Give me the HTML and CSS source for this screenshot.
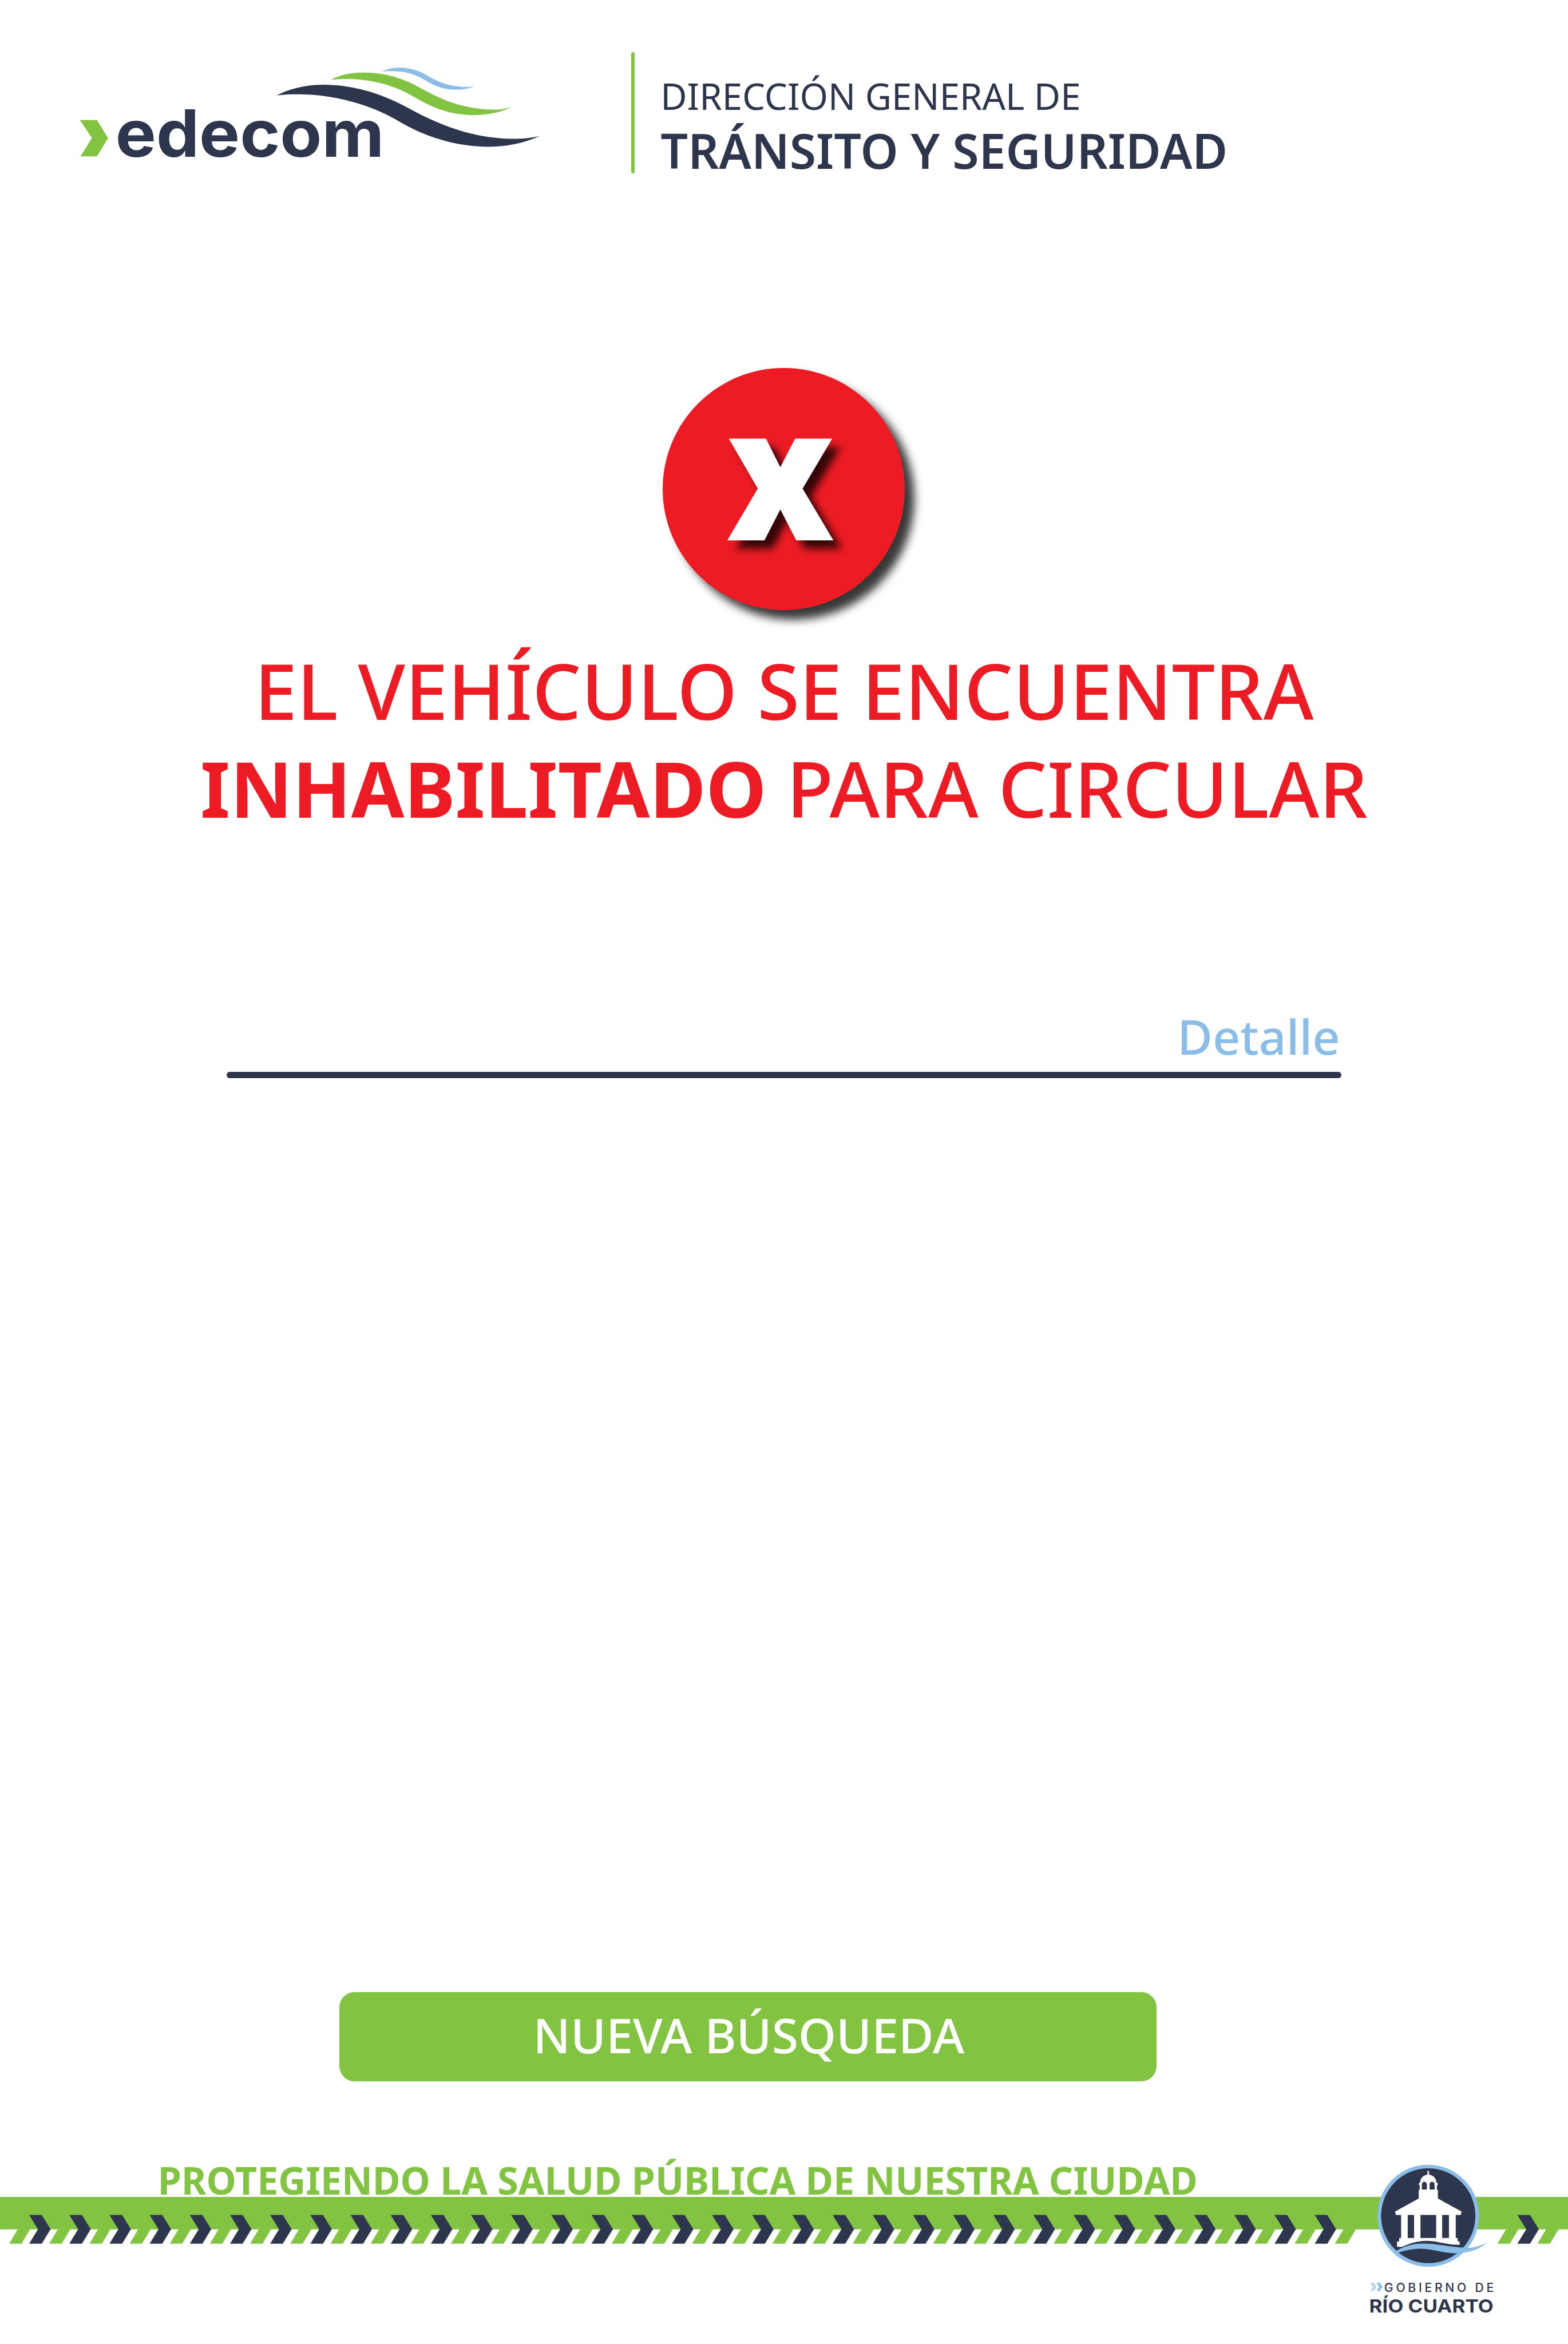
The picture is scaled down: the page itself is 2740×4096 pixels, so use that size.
FILE: index.html
```html
<!DOCTYPE html>
<html lang="es">
<head>
<meta charset="utf-8">
<title>Edecom - Tránsito y Seguridad</title>
<link rel="stylesheet" href="styles.css">
</head>
<body>
<header class="header">
  <svg class="logo" viewBox="0 0 860 260" role="img" aria-label="edecom">
    <g transform="scale(.54847 .33333)">
      <path fill="#82c341" d="M40 428H95L131 524 95 621H42L79 524Z"/>
      <path fill="#2d364c" d="M675 297C720 260 770 240 828 240C920 240 1010 285 1090 355C1200 455 1310 528 1448 528C1475 528 1500 521 1525 513C1475 550 1420 570 1360 570C1250 570 1150 515 1060 425C975 345 860 291 745 291C720 291 700 293 675 297Z"/>
      <path fill="#82c341" d="M852 214C880 188 915 176 957 176C1030 176 1090 212 1140 258C1210 323 1285 373 1383 373C1403 373 1418 366 1434 360C1398 388 1358 402 1314 402C1240 402 1180 366 1120 306C1065 250 990 212 905 210C885 210 870 211 852 214Z"/>
      <path fill="#8abde7" d="M1016 171C1032 157 1050 150 1072 150C1105 150 1135 165 1160 190C1200 230 1240 252 1288 252C1298 252 1306 250 1316 247C1298 260 1278 267 1254 267C1215 267 1185 248 1155 216C1125 185 1090 168 1045 168C1034 168 1026 169 1016 171Z"/>
    </g>
    <text class="logo-word" x="85" y="208" textLength="476" lengthAdjust="spacingAndGlyphs">edecom</text>
  </svg>
  <div class="divider"></div>
  <div class="office">
    <div class="office-top">DIRECCIÓN GENERAL DE</div>
    <div class="office-name">TRÁNSITO Y SEGURIDAD</div>
  </div>
</header>

<main class="main">
  <svg class="status" viewBox="0 0 429 429">
    <circle class="status-disc" cx="214.5" cy="214.5" r="214.5"/>
    <text class="status-mark" x="113" y="305.5" textLength="191" lengthAdjust="spacingAndGlyphs">x</text>
  </svg>
  <h1 class="message">EL VEHÍCULO SE ENCUENTRA<br><b>INHABILITADO</b> PARA CIRCULAR</h1>
  <section class="detail">
    <h2 class="detail-title">Detalle</h2>
    <div class="detail-rule"></div>
  </section>
  <button class="search" type="button">NUEVA BÚSQUEDA</button>
</main>

<footer class="footer">
  <p class="slogan">PROTEGIENDO LA SALUD PÚBLICA DE NUESTRA CIUDAD</p>
  <svg class="band" viewBox="0 0 2778 83">
    <defs>
      <pattern id="slant" patternUnits="userSpaceOnUse" x="16" width="71.18" height="83">
        <path fill="#82c341" d="M0 83 15.5 57H37.5L22 83Z"/>
      </pattern>
      <pattern id="arrow" patternUnits="userSpaceOnUse" x="51.5" width="71.18" height="83">
        <path fill="#2d364c" d="M0 32H22.4L38 57.3 22.4 83H0L15.7 57.3Z"/>
      </pattern>
    </defs>
    <rect width="2778" height="57.5" fill="#82c341"/>
    <rect x="16" width="2388" height="83" fill="url(#slant)"/>
    <rect x="51.5" width="2320" height="83" fill="url(#arrow)"/>
    <path fill="#82c341" d="M2653 83 2668.500 57H2690.500L2675 83ZM2724 83 2739.500 57H2761.500L2746 83Z"/>
    <path fill="#2d364c" d="M2688.400 32h22.400L2726.400 57.300 2710.800 83h-22.400L2704.100 57.300Z"/>
  </svg>
  <svg class="seal" viewBox="0 0 240 320">
    <g transform="translate(-180 0) scale(.34311 .33333)">
      <ellipse cx="846" cy="346.500" rx="253" ry="261.500" fill="#2d364c" stroke="#8abde7" stroke-width="19"/>
      <path fill="#fff" fill-rule="evenodd" d="M842 108H850V128C872 131 887 147 888 171H895V185H891V209H896V255L1018 324 1014 342H988V465H998V483H1008V501C960 501 920 491 880 483C820 473 765 485 710 512H685V483H696V465H706V342H679L675 324 797 255V209H802V185H798V171H804C805 147 821 131 842 128ZM813 207H839V180C839 161 813 161 813 180ZM853 207H879V180C879 161 853 161 853 180ZM740 342V465H773V342ZM806 342V465H887V342ZM918 342V465H953V342Z"/>
      <path fill="#8abde7" d="M676 538C715 508 765 494 820 494C900 494 975 517 1050 517C1085 516 1118 504 1153 488C1110 525 1055 546 985 546C920 546 870 522 805 522C765 522 725 532 690 543Z"/>
      <path fill="#b5d6f1" d="M547 703H564L580 725 564 747H549L560 725Z"/>
      <path fill="#8abde7" d="M579 703H595L611 725 595 747H580L592 725Z"/>
    </g>
    <text class="seal-top" x="32.300" y="250" textLength="194">GOBIERNO DE</text>
    <text class="seal-name" x="5.700" y="286.700" textLength="220" lengthAdjust="spacingAndGlyphs">RÍO CUARTO</text>
  </svg>
</footer>
</body>
</html>
```
FILE: styles.css
```css
/* 1rem = 100 design units; the design is 27.78rem wide */
html {
  font-size: 98.632px;
}

body {
  margin: 0;
  height: 41.53rem;
  overflow: hidden;
  display: flex;
  flex-direction: column;
  background: #fff;
  color: #2d364c;
  font-family: "Noto Sans", "Open Sans", sans-serif;
}

.header {
  display: flex;
  align-items: flex-start;
  height: 3.3rem;
}

.logo {
  flex: none;
  width: 8.6rem;
  height: 2.6rem;
  margin: 0.7rem 0 0 1.2rem;
}

.logo-word {
  font: 700 115px Inter, sans-serif;
  fill: #2d364c;
}

.divider {
  flex: none;
  width: 0.068rem;
  height: 2.15rem;
  margin: 0.92rem 0.455rem 0 1.38rem;
  border-radius: 0.034rem;
  background: #82c341;
}

.office {
  padding-top: 1.27rem;
  white-space: nowrap;
}

.office-top {
  font-size: 0.644rem;
  line-height: 0.88rem;
}

.office-name {
  font-size: 0.854rem;
  font-weight: 600;
  line-height: 1.04rem;
}

.main {
  display: flex;
  flex-direction: column;
  align-items: center;
  height: 35.039rem;
}

.status {
  flex: none;
  width: 4.29rem;
  height: 4.29rem;
  margin-top: 3.223rem;
  overflow: visible;
}

.status-disc {
  fill: #ed1c24;
  filter: drop-shadow(17px 17px 8px rgba(0, 0, 0, 0.78));
}

.status-mark {
  font: 900 326px "Noto Sans", sans-serif;
  fill: #fff;
  filter: drop-shadow(15px 15px 7px rgba(0, 0, 0, 0.78));
}

.message {
  margin: 0.55rem 0 0;
  color: #ed1c24;
  font-size: 1.359rem;
  font-weight: 500;
  line-height: 1.74rem;
  text-align: center;
  white-space: nowrap;
}

.message b {
  font-weight: 700;
}

.detail {
  width: 19.76rem;
  margin-top: 3.026rem;
}

.detail-title {
  margin: 0 0.03rem 0.12rem 0;
  color: #8abde7;
  font-size: 0.854rem;
  font-weight: 500;
  line-height: 1rem;
  text-align: right;
}

.detail-rule {
  height: 0.11rem;
  border-radius: 0.055rem;
  background: #2d364c;
}

.search {
  align-self: flex-start;
  width: 14.48rem;
  height: 1.587rem;
  margin: 16.193rem 0 0 6.01rem;
  padding: 0 0 0.057rem 0.03rem;
  border: 0;
  border-radius: 0.27rem;
  background: #82c341;
  color: #fff;
  font: 500 0.854rem/1.53rem "Noto Sans", "Open Sans", sans-serif;
}

.footer {
  position: relative;
}

.slogan {
  margin: 0 0 0 2.797rem;
  color: #82c341;
  font-size: 0.672rem;
  font-weight: 700;
  line-height: 0.581rem;
  white-space: nowrap;
}

.band {
  display: block;
  width: 27.78rem;
  height: 0.83rem;
}

/* The seal sits on top of the band */
.seal {
  position: absolute;
  left: 24.2rem;
  top: -0.239rem;
  width: 2.4rem;
  height: 3.2rem;
}

.seal-top {
  font: 500 21.5px Inter, sans-serif;
  fill: #2d364c;
}

.seal-name {
  font: 700 32px Inter, sans-serif;
  fill: #2d364c;
}
```
